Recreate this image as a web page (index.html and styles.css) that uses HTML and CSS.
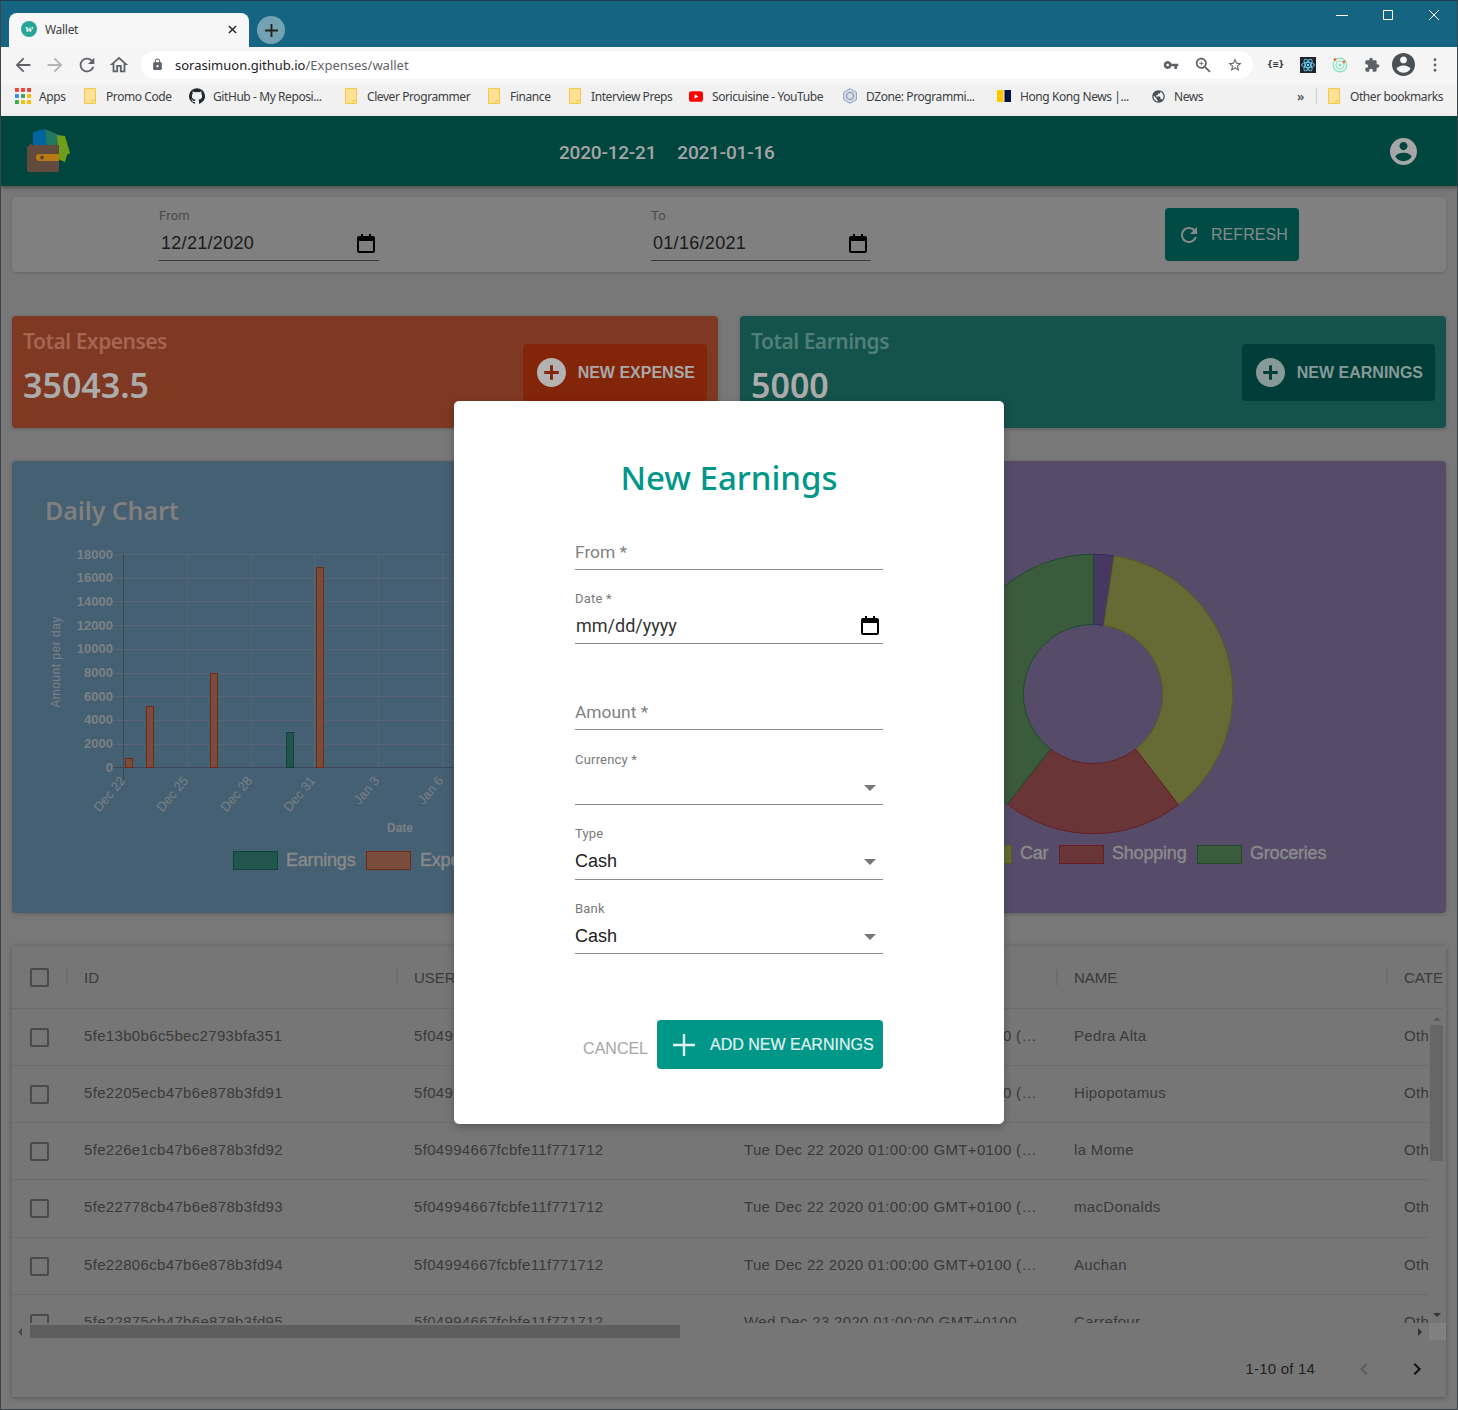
FILE: index.html
```html
<!DOCTYPE html>
<html lang="en">
<head>
  <meta charset="UTF-8">
  <title>Wallet</title>
  <link rel="stylesheet" href="styles.css">
</head>
<body>
  <svg class="defs" width="0" height="0">
    <symbol id="i-folder" viewBox="0 0 12 16"><path d="M.5.5h11v15H.5z" fill="#fde293" stroke="#f2c84c"/><path d="M8 15.5v-3h3.5" fill="none" stroke="#f2c84c"/></symbol>
    <symbol id="i-calendar" viewBox="0 0 18 19"><path d="M2 3h14a1 1 0 011 1v13a1 1 0 01-1 1H2a1 1 0 01-1-1V4a1 1 0 011-1z" fill="none" stroke="#000" stroke-width="2"/><path d="M1 3h16v4H1zM4 0h2v3H4zM12 0h2v3h-2z"/></symbol>
    <symbol id="i-plus-circle" viewBox="2 2 20 20"><path d="M12 2C6.48 2 2 6.48 2 12s4.48 10 10 10 10-4.48 10-10S17.52 2 12 2zm5 11h-4v4h-2v-4H7v-2h4V7h2v4h4v2z"/></symbol>
    <symbol id="i-account" viewBox="2 2 20 20"><path d="M12 2C6.48 2 2 6.48 2 12s4.48 10 10 10 10-4.48 10-10S17.52 2 12 2zm0 3c1.66 0 3 1.34 3 3s-1.34 3-3 3-3-1.34-3-3 1.34-3 3-3zm0 14.2c-2.5 0-4.71-1.28-6-3.22.03-1.99 4-3.08 6-3.08 1.99 0 5.97 1.09 6 3.08-1.29 1.94-3.5 3.22-6 3.22z"/></symbol>
    <symbol id="i-refresh" viewBox="0 0 24 24"><path d="M17.65 6.35C16.2 4.9 14.21 4 12 4c-4.42 0-7.99 3.58-7.99 8s3.57 8 7.99 8c3.73 0 6.84-2.55 7.73-6h-2.08c-.82 2.33-3.04 4-5.65 4-3.31 0-6-2.69-6-6s2.69-6 6-6c1.66 0 3.14.69 4.22 1.78L13 11h7V4l-2.35 2.35z"/></symbol>
  </svg>

  <div class="window">
    <!-- browser chrome -->
    <div class="tabstrip">
      <div class="tab">
        <span class="favicon">w</span>
        <span class="tab-title">Wallet</span>
        <svg class="tab-close" viewBox="0 0 10 10"><path d="M1 1l8 8M9 1l-8 8" stroke="#222" stroke-width="1.6"/></svg>
      </div>
      <div class="new-tab"><svg viewBox="0 0 14 14"><path d="M7 0v14M0 7h14" stroke="#222" stroke-width="2"/></svg></div>
      <div class="win-controls">
        <svg viewBox="0 0 12 12"><path d="M0 6.5h12" stroke="#fff"/></svg>
        <svg viewBox="0 0 12 12"><path d="M1.5 1.5h9v9h-9z" fill="none" stroke="#fff"/></svg>
        <svg viewBox="0 0 12 12"><path d="M1 1l10 10M11 1L1 11" stroke="#fff"/></svg>
      </div>
    </div>

    <div class="toolbar">
      <svg class="nav-icon" viewBox="0 0 24 24"><path fill="#5f6368" d="M20 11H7.83l5.59-5.59L12 4l-8 8 8 8 1.41-1.41L7.83 13H20v-2z"/></svg>
      <svg class="nav-icon" viewBox="0 0 24 24"><path fill="#b3b5b8" d="M12 4l-1.41 1.41L16.17 11H4v2h12.17l-5.58 5.59L12 20l8-8z"/></svg>
      <svg class="nav-icon" viewBox="0 0 24 24" fill="#5f6368"><use href="#i-refresh"/></svg>
      <svg class="nav-icon" viewBox="0 0 24 24"><path fill="#5f6368" d="M12 5.69l5 4.5V18h-2v-6H9v6H7v-7.81l5-4.5M12 3L2 12h3v8h6v-6h2v6h6v-8h3L12 3z"/></svg>
      <div class="omnibox">
        <svg class="lock" viewBox="0 0 24 24"><path fill="#5f6368" d="M18 8h-1V6c0-2.76-2.24-5-5-5S7 3.24 7 6v2H6c-1.1 0-2 .9-2 2v10c0 1.1.9 2 2 2h12c1.1 0 2-.9 2-2V10c0-1.1-.9-2-2-2zm-6 9c-1.1 0-2-.9-2-2s.9-2 2-2 2 .9 2 2-.9 2-2 2zm3.1-9H8.9V6c0-1.71 1.39-3.1 3.1-3.1 1.71 0 3.1 1.39 3.1 3.1v2z"/></svg>
        <span class="url">sorasimuon.github.io<span class="url-path">/Expenses/wallet</span></span>
        <div class="omni-icons">
          <svg viewBox="0 0 24 24"><path fill="#5f6368" d="M12.65 10C11.83 7.67 9.61 6 7 6c-3.31 0-6 2.69-6 6s2.69 6 6 6c2.61 0 4.83-1.67 5.65-4H17v4h4v-4h2v-4H12.65zM7 14c-1.1 0-2-.9-2-2s.9-2 2-2 2 .9 2 2-.9 2-2 2z"/></svg>
          <svg viewBox="2 2 19 19"><path fill="#5f6368" d="M15.5 14h-.79l-.28-.27C15.41 12.59 16 11.11 16 9.5 16 5.91 13.09 3 9.5 3S3 5.91 3 9.5 5.91 16 9.5 16c1.61 0 3.09-.59 4.23-1.57l.27.28v.79l5 4.99L20.49 19l-4.99-5zm-6 0C7.01 14 5 11.99 5 9.5S7.01 5 9.5 5 14 7.01 14 9.5 11.99 14 9.5 14zM12 10h-2v2H9v-2H7V9h2V7h1v2h2v1z"/></svg>
          <svg viewBox="0 0 24 24"><path fill="#5f6368" d="M22 9.24l-7.19-.62L12 2 9.19 8.63 2 9.24l5.46 4.73L5.82 21 12 17.27 18.18 21l-1.63-7.03L22 9.24zM12 15.4l-3.76 2.27 1-4.28-3.32-2.88 4.38-.38L12 6.1l1.71 4.04 4.38.38-3.32 2.88 1 4.28L12 15.4z"/></svg>
        </div>
      </div>
      <div class="extensions">
        <span class="ext-json">{≡}</span>
        <svg class="ext" viewBox="0 0 16 16"><rect width="16" height="16" fill="#20232a"/><g fill="none" stroke="#61dafb" stroke-width=".9"><ellipse cx="8" cy="8" rx="6.5" ry="2.6"/><ellipse cx="8" cy="8" rx="6.5" ry="2.6" transform="rotate(60 8 8)"/><ellipse cx="8" cy="8" rx="6.5" ry="2.6" transform="rotate(120 8 8)"/></g><circle cx="8" cy="8" r="1.3" fill="#61dafb"/></svg>
        <svg class="ext" viewBox="0 0 16 16"><g fill="none" stroke="#7fe3c0" stroke-width="1.2"><circle cx="8" cy="8" r="6.8"/><circle cx="8" cy="8" r="4"/></g><circle cx="8" cy="8" r="1.5" fill="#7fe3c0"/><circle cx="3" cy="2.5" r="1.5" fill="#f26d3d"/><circle cx="12" cy="5" r="1.4" fill="#f26d3d"/></svg>
        <svg class="ext" viewBox="0 0 24 24"><path fill="#5f6368" d="M20.5 11H19V7c0-1.1-.9-2-2-2h-4V3.5C13 2.12 11.88 1 10.5 1S8 2.12 8 3.5V5H4c-1.1 0-1.99.9-1.99 2v3.8H3.5c1.49 0 2.7 1.21 2.7 2.7s-1.21 2.7-2.7 2.7H2V20c0 1.1.9 2 2 2h3.8v-1.5c0-1.49 1.21-2.7 2.7-2.7 1.49 0 2.7 1.21 2.7 2.7V22H17c1.1 0 2-.9 2-2v-4h1.5c1.38 0 2.5-1.12 2.5-2.5S21.88 11 20.5 11z"/></svg>
        <svg class="avatar" fill="#4a5054"><use href="#i-account"/></svg>
        <svg class="dots" viewBox="0 0 4 16"><circle cx="2" cy="2" r="1.6" fill="#5f6368"/><circle cx="2" cy="8" r="1.6" fill="#5f6368"/><circle cx="2" cy="14" r="1.6" fill="#5f6368"/></svg>
      </div>
    </div>

    <div class="bookmarks">
      <div class="bm bm-apps">
        <svg class="bm-icon" viewBox="0 0 14 14"><g fill="#ea4335"><rect width="3.4" height="3.4"/><rect x="5.3" width="3.4" height="3.4"/><rect x="10.6" width="3.4" height="3.4"/></g><g fill="#4285f4"><rect y="5.3" width="3.4" height="3.4"/></g><g fill="#34a853"><rect x="5.3" y="5.3" width="3.4" height="3.4"/><rect y="10.6" width="3.4" height="3.4"/></g><g fill="#fbbc05"><rect x="10.6" y="5.3" width="3.4" height="3.4"/><rect x="5.3" y="10.6" width="3.4" height="3.4"/><rect x="10.6" y="10.6" width="3.4" height="3.4"/></g></svg>
        Apps
      </div>
      <div class="bm bm-promo"><svg class="bm-folder"><use href="#i-folder"/></svg>Promo Code</div>
      <div class="bm bm-github">
        <svg class="bm-icon" viewBox="0 0 24 24"><path fill="#24292e" d="M12 .3a12 12 0 00-3.8 23.38c.6.11.82-.26.82-.58v-2.03c-3.34.73-4.04-1.61-4.04-1.61-.55-1.39-1.33-1.76-1.33-1.76-1.09-.74.08-.73.08-.73 1.2.09 1.84 1.24 1.84 1.24 1.07 1.83 2.8 1.3 3.49 1 .1-.78.42-1.3.76-1.6-2.67-.31-5.47-1.34-5.47-5.93 0-1.31.47-2.38 1.24-3.22-.13-.3-.54-1.52.12-3.18 0 0 1-.32 3.3 1.23a11.5 11.5 0 016 0c2.28-1.55 3.29-1.23 3.29-1.23.66 1.66.25 2.88.12 3.18.77.84 1.23 1.91 1.23 3.22 0 4.61-2.81 5.62-5.48 5.92.43.37.81 1.1.81 2.22v3.29c0 .32.22.7.83.58A12 12 0 0012 .3z"/></svg>
        GitHub - My Reposi...
      </div>
      <div class="bm bm-clever"><svg class="bm-folder"><use href="#i-folder"/></svg>Clever Programmer</div>
      <div class="bm bm-finance"><svg class="bm-folder"><use href="#i-folder"/></svg>Finance</div>
      <div class="bm bm-prep"><svg class="bm-folder"><use href="#i-folder"/></svg>Interview Preps</div>
      <div class="bm bm-yt">
        <svg class="bm-icon" viewBox="0 0 16 12"><rect width="16" height="12" rx="3" fill="#f00"/><path d="M6.4 3.4L10.8 6l-4.4 2.6z" fill="#fff"/></svg>
        Soricuisine - YouTube
      </div>
      <div class="bm bm-dzone">
        <svg class="bm-icon" viewBox="0 0 16 16"><path d="M8 .7l6.4 3.6v7.4L8 15.3l-6.4-3.6V4.3z" fill="#d8dde6" stroke="#8d9fc2"/><circle cx="8" cy="8" r="3.6" fill="none" stroke="#7b8aa6"/></svg>
        DZone: Programmi...
      </div>
      <div class="bm bm-hk">
        <svg class="bm-icon" viewBox="0 0 14 14"><rect y="1" width="6.5" height="12" fill="#ffc800"/><rect x="7.5" y="1" width="6.5" height="12" fill="#001246"/></svg>
        Hong Kong News |...
      </div>
      <div class="bm bm-news">
        <svg class="bm-icon" viewBox="0 0 24 24"><path fill="#4a5054" d="M12 2C6.48 2 2 6.48 2 12s4.48 10 10 10 10-4.48 10-10S17.52 2 12 2zm-1 17.93c-3.95-.49-7-3.85-7-7.93 0-.62.08-1.21.21-1.79L9 15v1c0 1.1.9 2 2 2v1.93zm6.9-2.54c-.26-.81-1-1.39-1.9-1.39h-1v-3c0-.55-.45-1-1-1H8v-2h2c.55 0 1-.45 1-1V7h2c1.1 0 2-.9 2-2v-.41c2.93 1.19 5 4.06 5 7.41 0 2.08-.8 3.97-2.1 5.39z"/></svg>
        News
      </div>
      <div class="bm-more">»</div>
      <div class="bm-sep"></div>
      <div class="bm bm-other"><svg class="bm-folder"><use href="#i-folder"/></svg>Other bookmarks</div>
    </div>

    <!-- app -->
    <header class="app-bar">
      <svg class="logo" viewBox="0 0 44 44">
        <path d="M6 3L18 0l3 17H6z" fill="#00659f"/>
        <path d="M18 0l14 6-3 12H20z" fill="#23795f"/>
        <path d="M30 6l8 1 5 17-3 2-2 7-7-3z" fill="#6f9d1c"/>
        <path d="M5 14l-5 4v23c0 1 1 2 2 2h28c1 0 2-1 2-2V16H5z" fill="#634a3f"/>
        <path d="M12 25h20v7H12c-2 0-3-1.500-3-3.500s1-3.500 3-3.500z" fill="#b87a12"/>
        <circle cx="15" cy="28.500" r="2" fill="#634a3f"/>
      </svg>
      <div class="dates"><span>2020-12-21</span><span>2021-01-16</span></div>
      <svg class="user-icon"><use href="#i-account"/></svg>
    </header>

    <main class="content">
      <section class="filter-card">
        <div class="date-field">
          <label>From</label>
          <div class="date-value">12/21/2020<svg class="cal-icon"><use href="#i-calendar"/></svg></div>
        </div>
        <div class="date-field date-field-to">
          <label>To</label>
          <div class="date-value">01/16/2021<svg class="cal-icon"><use href="#i-calendar"/></svg></div>
        </div>
        <button class="refresh-btn"><svg><use href="#i-refresh"/></svg>REFRESH</button>
      </section>

      <section class="stats">
        <div class="stat-card stat-expense">
          <div>
            <div class="stat-title">Total Expenses</div>
            <div class="stat-value">35043.5</div>
          </div>
          <button class="stat-btn"><svg><use href="#i-plus-circle"/></svg>NEW EXPENSE</button>
        </div>
        <div class="stat-card stat-earning">
          <div>
            <div class="stat-title">Total Earnings</div>
            <div class="stat-value">5000</div>
          </div>
          <button class="stat-btn"><svg><use href="#i-plus-circle"/></svg>NEW EARNINGS</button>
        </div>
      </section>

      <section class="charts">
        <div class="chart-card chart-daily">
          <h2>Daily Chart</h2>
          <svg class="chart" viewBox="12 529 706 384">
            <g class="grid">
              <path d="M113 554.500H710M113 578.500H710M113 601.500H710M113 625.500H710M113 649.500H710M113 673.500H710M113 696.500H710M113 720.500H710M113 744.500H710"/>
              <path d="M187.500 554V767M251.500 554V767M314.500 554V767M378.500 554V767M442.500 554V767"/>
            </g>
            <path class="axis" d="M113 767.500H710M123.500 554V779"/>
            <g class="y-labels">
              <text x="113" y="559">18000</text><text x="113" y="582">16000</text><text x="113" y="606">14000</text>
              <text x="113" y="630">12000</text><text x="113" y="653">10000</text><text x="113" y="677">8000</text>
              <text x="113" y="701">6000</text><text x="113" y="724">4000</text><text x="113" y="748">2000</text><text x="113" y="772">0</text>
            </g>
            <g class="x-labels">
              <text transform="translate(126 781) rotate(-50)">Dec 22</text>
              <text transform="translate(189 781) rotate(-50)">Dec 25</text>
              <text transform="translate(253 781) rotate(-50)">Dec 28</text>
              <text transform="translate(316 781) rotate(-50)">Dec 31</text>
              <text transform="translate(380 781) rotate(-50)">Jan 3</text>
              <text transform="translate(444 781) rotate(-50)">Jan 6</text>
            </g>
            <text class="axis-title" transform="translate(60 662) rotate(-90)">Amount per day</text>
            <text class="axis-title axis-date" x="400" y="832">Date</text>
            <g class="bar-red">
              <rect x="125.500" y="758.500" width="7" height="9"/>
              <rect x="146.500" y="706.500" width="7" height="61"/>
              <rect x="210.500" y="673.500" width="7" height="94"/>
              <rect x="316.500" y="567.500" width="7" height="200"/>
            </g>
            <rect class="bar-green" x="286.500" y="732.500" width="7" height="35"/>
            <rect class="bar-green" x="233.500" y="851.500" width="44" height="18"/>
            <text class="legend" x="286" y="866">Earnings</text>
            <rect class="bar-red" x="366.500" y="851.500" width="44" height="18"/>
            <text class="legend" x="420" y="866">Expenses</text>
          </svg>
        </div>
        <div class="chart-card chart-category">
          <h2>Categories</h2>
          <svg class="chart" viewBox="740 529 706 384">
            <path class="seg-purple" d="M1093.300 554.300A139.700 139.700 0 0 1 1114 555.800L1103.600 625.300A69.500 69.500 0 0 0 1093.300 624.500Z"/>
            <path class="seg-olive" d="M1114 555.800A139.700 139.700 0 0 1 1178.400 804.700L1135.600 749.100A69.500 69.500 0 0 0 1103.600 625.300Z"/>
            <path class="seg-red" d="M1178.400 804.700A139.700 139.700 0 0 1 1007.300 804.100L1050.500 749.100A69.500 69.500 0 0 0 1135.600 749.100Z"/>
            <path class="seg-green" d="M1007.300 804.100A139.700 139.700 0 0 1 1093.300 554.300L1093.300 624.500A69.500 69.500 0 0 0 1050.500 749.100Z"/>
            <rect class="seg-olive" x="967.500" y="845.500" width="44" height="18"/>
            <text class="legend" x="1020" y="859">Car</text>
            <rect class="seg-red" x="1059.500" y="845.500" width="44" height="18"/>
            <text class="legend" x="1112" y="859">Shopping</text>
            <rect class="seg-green" x="1197.500" y="845.500" width="44" height="18"/>
            <text class="legend" x="1250" y="859">Groceries</text>
          </svg>
        </div>
      </section>

      <section class="table-card">
        <div class="t-row t-head">
          <div class="t-check"><span class="checkbox"></span></div>
          <div class="t-cell"><i></i>ID</div>
          <div class="t-cell"><i></i>USER ID</div>
          <div class="t-cell"><i></i>DATE</div>
          <div class="t-cell"><i></i>NAME</div>
          <div class="t-cell"><i></i>CATEGORY</div>
        </div>
        <div class="t-body">
          <div class="t-rows">
            <div class="t-row">
              <div class="t-check"><span class="checkbox"></span></div>
              <div class="t-cell">5fe13b0b6c5bec2793bfa351</div>
              <div class="t-cell">5f04994667fcbfe11f771712</div>
              <div class="t-cell"><span class="clip">Tue Dec 22 2020 01:00:00 GMT+0100 (Central European Standard Time)</span></div>
              <div class="t-cell">Pedra Alta</div>
              <div class="t-cell">Other</div>
            </div>
            <div class="t-row">
              <div class="t-check"><span class="checkbox"></span></div>
              <div class="t-cell">5fe2205ecb47b6e878b3fd91</div>
              <div class="t-cell">5f04994667fcbfe11f771712</div>
              <div class="t-cell"><span class="clip">Tue Dec 22 2020 01:00:00 GMT+0100 (Central European Standard Time)</span></div>
              <div class="t-cell">Hipopotamus</div>
              <div class="t-cell">Other</div>
            </div>
            <div class="t-row">
              <div class="t-check"><span class="checkbox"></span></div>
              <div class="t-cell">5fe226e1cb47b6e878b3fd92</div>
              <div class="t-cell">5f04994667fcbfe11f771712</div>
              <div class="t-cell"><span class="clip">Tue Dec 22 2020 01:00:00 GMT+0100 (Central European Standard Time)</span></div>
              <div class="t-cell">la Mome</div>
              <div class="t-cell">Other</div>
            </div>
            <div class="t-row">
              <div class="t-check"><span class="checkbox"></span></div>
              <div class="t-cell">5fe22778cb47b6e878b3fd93</div>
              <div class="t-cell">5f04994667fcbfe11f771712</div>
              <div class="t-cell"><span class="clip">Tue Dec 22 2020 01:00:00 GMT+0100 (Central European Standard Time)</span></div>
              <div class="t-cell">macDonalds</div>
              <div class="t-cell">Other</div>
            </div>
            <div class="t-row">
              <div class="t-check"><span class="checkbox"></span></div>
              <div class="t-cell">5fe22806cb47b6e878b3fd94</div>
              <div class="t-cell">5f04994667fcbfe11f771712</div>
              <div class="t-cell"><span class="clip">Tue Dec 22 2020 01:00:00 GMT+0100 (Central European Standard Time)</span></div>
              <div class="t-cell">Auchan</div>
              <div class="t-cell">Other</div>
            </div>
            <div class="t-row">
              <div class="t-check"><span class="checkbox"></span></div>
              <div class="t-cell">5fe22875cb47b6e878b3fd95</div>
              <div class="t-cell">5f04994667fcbfe11f771712</div>
              <div class="t-cell"><span class="clip">Wed Dec 23 2020 01:00:00 GMT+0100 (Central European Standard Time)</span></div>
              <div class="t-cell">Carrefour</div>
              <div class="t-cell">Other</div>
            </div>
          </div>
          <div class="v-scroll">
            <span class="arrow-up"></span>
            <div class="v-thumb"></div>
            <span class="arrow-down"></span>
          </div>
        </div>
        <div class="h-scroll">
          <span class="arrow-left"></span>
          <div class="h-thumb"></div>
          <span class="arrow-right"></span>
          <div class="scroll-corner"></div>
        </div>
        <div class="t-footer">
          <span class="page-count">1-10 of 14</span>
          <svg class="page-prev" viewBox="0 0 24 24"><path d="M15.41 7.41L14 6l-6 6 6 6 1.41-1.41L10.83 12z"/></svg>
          <svg class="page-next" viewBox="0 0 24 24"><path d="M10 6L8.59 7.41 13.17 12l-4.58 4.59L10 18l6-6z"/></svg>
        </div>
      </section>
    </main>

    <!-- dialog -->
    <div class="modal">
      <h1>New Earnings</h1>
      <div class="field field-plain field-from"><span class="placeholder">From *</span></div>
      <div class="field field-date">
        <label>Date *</label>
        <div class="field-value date-mask">mm/dd/yyyy<svg class="cal-icon"><use href="#i-calendar"/></svg></div>
      </div>
      <div class="field field-plain field-amount"><span class="placeholder">Amount *</span></div>
      <div class="field field-currency">
        <label>Currency *</label>
        <div class="field-value"><span></span><i class="caret"></i></div>
      </div>
      <div class="field">
        <label>Type</label>
        <div class="field-value">Cash<i class="caret"></i></div>
      </div>
      <div class="field field-bank">
        <label>Bank</label>
        <div class="field-value">Cash<i class="caret"></i></div>
      </div>
      <div class="modal-actions">
        <button class="cancel-btn">CANCEL</button>
        <button class="add-btn"><svg viewBox="0 0 22 22"><path d="M11 0v22M0 11h22" stroke="#e0f2f1" stroke-width="2.400"/></svg>ADD NEW EARNINGS</button>
      </div>
    </div>
  </div>
</body>
</html>
```

FILE: styles.css
```css
* {
  box-sizing: border-box;
}
html, body {
  margin: 0;
  height: 100%;
  overflow: hidden;
}
body {
  font-family: "Liberation Sans", Arial, sans-serif;
  background: #787878;
}
button {
  border: none;
  cursor: pointer;
  font-family: inherit;
}
.defs {
  position: absolute;
}
.window {
  position: relative;
  width: 1458px;
  height: 1410px;
  border: 1px solid #3c4449;
  border-top-color: #1d3a4b;
  overflow: hidden;
}

/* browser chrome */
.tabstrip {
  height: 46px;
  background: #156481;
  display: flex;
  align-items: flex-end;
  padding-left: 8px;
}
.tab {
  width: 240px;
  height: 34px;
  background: #f7f7f7;
  border-radius: 8px 8px 0 0;
  display: flex;
  align-items: center;
  padding: 0 12px 2px;
  font: 12px "Noto Sans", sans-serif;
  letter-spacing: -.3px;
  color: #3c4043;
}
.favicon {
  width: 16px;
  height: 16px;
  border-radius: 50%;
  background: #26a69a;
  color: #fff;
  font: italic 700 11px/15px "Liberation Serif", serif;
  text-align: center;
}
.tab-title {
  margin-left: 8px;
  flex: 1;
}
.tab-close {
  width: 9px;
  height: 9px;
}
.new-tab {
  width: 28px;
  height: 28px;
  border-radius: 50%;
  background: #73a2b3;
  margin: 0 0 3px 8px;
  display: flex;
  align-items: center;
  justify-content: center;
}
.new-tab svg {
  width: 13px;
  height: 13px;
}
.win-controls {
  margin-left: auto;
  align-self: flex-start;
  display: flex;
  gap: 34px;
  padding: 8px 17px 0 0;
}
.win-controls svg {
  width: 12px;
  height: 12px;
}
.toolbar {
  height: 37px;
  background: #f5f5f5;
  display: flex;
  align-items: center;
  padding: 0 0 2px 11px;
}
.nav-icon {
  width: 22px;
  height: 22px;
  margin-right: 10px;
}
.omnibox {
  width: 1112px;
  height: 28px;
  margin-left: 1px;
  background: #fff;
  border-radius: 14px;
  display: flex;
  align-items: center;
  padding: 0 10px 0 10px;
}
.lock {
  width: 13px;
  height: 13px;
}
.url {
  margin-left: 11px;
  font: 13px "Noto Sans", sans-serif;
  color: #202124;
}
.url-path {
  color: #5f6368;
}
.omni-icons {
  margin-left: auto;
  display: flex;
  gap: 16px;
}
.omni-icons svg {
  width: 16px;
  height: 16px;
}
.extensions {
  display: flex;
  align-items: center;
  margin-left: 14px;
}
.ext-json {
  width: 17px;
  font: 700 8px "DejaVu Sans", sans-serif;
  letter-spacing: -.5px;
  color: #333;
  margin-right: 16px;
  white-space: nowrap;
}
.ext {
  width: 16px;
  height: 16px;
  margin-right: 16px;
}
.avatar {
  width: 23px;
  height: 23px;
  margin-left: -4px;
  margin-right: 12px;
}
.dots {
  width: 4px;
  height: 14px;
  margin-left: 6px;
}
.bookmarks {
  height: 32px;
  background: #f1f1f1;
  display: flex;
  align-items: center;
  padding-bottom: 8px;
  font: 12px "Noto Sans", sans-serif;
  color: #3c4043;
  white-space: nowrap;
}
.bm {
  display: flex;
  align-items: center;
  letter-spacing: -.42px;
}
.bm-icon {
  width: 16px;
  height: 16px;
  margin-right: 8px;
}
.bm-folder {
  width: 12px;
  height: 16px;
  margin-right: 10px;
}
.bm-apps { margin-left: 14px; width: 69px; }
.bm-promo { width: 105px; }
.bm-github { width: 156px; }
.bm-clever { width: 143px; }
.bm-finance { width: 81px; }
.bm-prep { width: 120px; }
.bm-yt { width: 153px; }
.bm-dzone { width: 155px; }
.bm-hk { width: 154px; }
.bm-news { width: 146px; }
.bm-more {
  width: 19px;
  color: #5f6368;
  font-weight: 700;
}
.bm-sep {
  width: 1px;
  height: 16px;
  background: #ccc;
  margin-right: 11px;
}
.bm-yt .bm-icon { width: 14px; height: 11px; margin-right: 9px; }
.bm-hk .bm-icon { width: 14px; height: 14px; margin-right: 9px; }
.bm-news .bm-icon { width: 15px; height: 15px; }

/* app */
.app-bar {
  height: 70px;
  background: #00453e;
  display: flex;
  align-items: center;
  padding: 0 40px 0 26px;
  box-shadow: 0 2px 4px rgba(0, 0, 0, .35);
  position: relative;
}
.logo {
  width: 44px;
  height: 44px;
}
.dates {
  margin: 3px 0 0 488px;
  display: flex;
  gap: 21px;
  font: 500 19px Roboto, sans-serif;
  letter-spacing: -.2px;
  color: #a6a6a6;
}
.user-icon {
  width: 27px;
  height: 27px;
  margin-left: auto;
  fill: #a6a6a6;
}
.content {
  padding: 11px 11px 0;
}
.filter-card {
  height: 75px;
  background: #808080;
  border-radius: 4px;
  display: flex;
  padding: 11px 0 0 147px;
  box-shadow: 0 1px 3px rgba(0, 0, 0, .15);
}
.date-field {
  width: 220px;
  height: 53px;
  border-bottom: 1px solid #3b3b3b;
}
.date-field label {
  display: block;
  margin-top: 1px;
  font: 13px/14px Roboto, sans-serif;
  letter-spacing: .2px;
  color: #4a4a4a;
}
.date-field-to {
  margin-left: 272px;
}
.date-value {
  display: flex;
  align-items: center;
  justify-content: space-between;
  padding: 10px 4px 0 2px;
  font-size: 18px;
  letter-spacing: .3px;
  color: #1a1a1a;
}
.cal-icon {
  width: 18px;
  height: 19px;
}
.refresh-btn {
  width: 134px;
  height: 53px;
  margin-left: 294px;
  background: #004c45;
  border-radius: 4px;
  display: flex;
  align-items: center;
  padding: 0 0 0 12px;
  font-size: 16px;
  letter-spacing: .05px;
  color: #858b89;
}
.refresh-btn svg {
  width: 24px;
  height: 24px;
  margin-right: 10px;
  fill: #858b89;
}
.stats {
  display: flex;
  gap: 22px;
  margin-top: 44px;
}
.stat-card {
  flex: 1;
  height: 112px;
  border-radius: 4px;
  display: flex;
  justify-content: space-between;
  align-items: flex-start;
  padding: 10px 11px 0;
  box-shadow: 0 1px 4px rgba(0, 0, 0, .2);
}
.stat-expense {
  background: #7f3923;
}
.stat-earning {
  background: #14524c;
}
.stat-title {
  font: 600 21px/30px "Noto Sans", sans-serif;
  letter-spacing: -.5px;
}
.stat-expense .stat-title {
  color: #a56552;
}
.stat-earning .stat-title {
  color: #4f7f76;
}
.stat-value {
  margin-top: 7px;
  font: 600 34px/44px "Noto Sans", sans-serif;
  color: #ababab;
}
.stat-btn {
  margin-top: 18px;
  height: 57px;
  display: flex;
  align-items: center;
  padding: 0 12px 0 14px;
  border-radius: 4px;
  font-size: 16px;
  font-weight: 700;
  color: #a8a8a8;
}
.stat-btn svg {
  width: 29px;
  height: 29px;
  margin-right: 12px;
}
.stat-expense .stat-btn {
  background: #822508;
}
.stat-expense .stat-btn svg {
  fill: #b3b3b3;
}
.stat-earning .stat-btn {
  background: #003d38;
  color: #879a97;
}
.stat-earning .stat-btn svg {
  fill: #879a97;
}
.charts {
  display: flex;
  gap: 22px;
  margin-top: 33px;
}
.chart-card {
  flex: 1;
  height: 452px;
  border-radius: 4px;
  box-shadow: 0 1px 4px rgba(0, 0, 0, .2);
}
.chart-card h2 {
  margin: 0;
  padding: 31px 0 0 33px;
  height: 68px;
  font: 600 25px/36px "Noto Sans", sans-serif;
  letter-spacing: -.1px;
  color: #7f7f7f;
}
.chart-daily {
  background: #456072;
}
.chart-category {
  background: #564c6a;
}
.chart {
  display: block;
  width: 706px;
  height: 384px;
}
.grid path {
  fill: none;
  stroke: #566474;
}
.axis {
  fill: none;
  stroke: #3a4856;
}
.y-labels text {
  font-size: 13px;
  font-weight: 700;
  text-anchor: end;
  fill: #7b8086;
}
.x-labels text {
  font-size: 13px;
  text-anchor: end;
  fill: #7b8086;
}
.axis-title {
  font-size: 12px;
  letter-spacing: .5px;
  text-anchor: middle;
  fill: #7b8086;
}
.axis-date {
  font-weight: 700;
  letter-spacing: 0;
}
.bar-red rect, rect.bar-red {
  fill: #7a4c3b;
  stroke: #702a15;
}
.bar-green {
  fill: #22554e;
  stroke: #0e443c;
}
.legend {
  font-size: 18px;
  letter-spacing: -.2px;
  stroke: #8a8a8a;
  stroke-width: .4;
  fill: #8a8a8a;
}
.seg-purple {
  fill: #473862;
  stroke: #372667;
}
.seg-olive {
  fill: #666a35;
  stroke: #575c1d;
}
.seg-red {
  fill: #6a3536;
  stroke: #671d27;
}
.seg-green {
  fill: #3b5b3d;
  stroke: #1f4a2b;
}

/* table */
.table-card {
  height: 451px;
  margin-top: 33px;
  background: #767676;
  box-shadow: 0 1px 5px rgba(0, 0, 0, .3);
  font-size: 15px;
  letter-spacing: .33px;
  color: #3a3a3a;
  overflow: hidden;
}
.t-row {
  display: flex;
  height: 57px;
  border-bottom: 1px solid #6c6c6c;
  white-space: nowrap;
}
.t-rows .t-row:nth-child(4) {
  height: 58px;
}
.t-head {
  width: 1431px;
  height: 63px;
  overflow: hidden;
  letter-spacing: 0;
}
.t-check {
  flex: 0 0 54px;
  display: flex;
  align-items: center;
  padding-left: 18px;
}
.checkbox {
  width: 19px;
  height: 19px;
  border: 2px solid #4a4a4a;
  border-radius: 2px;
}
.t-cell {
  flex: 0 0 330px;
  display: flex;
  align-items: center;
  padding: 0 0 4px 18px;
}
.t-head .t-cell {
  padding: 0;
}
.t-head i {
  width: 2px;
  height: 16px;
  margin-right: 16px;
  background: #6c6c6c;
}
.clip {
  width: 294px;
  overflow: hidden;
  text-overflow: ellipsis;
}
.t-body {
  display: flex;
  height: 314px;
}
.t-rows {
  width: 1416px;
  overflow: hidden;
}
.v-scroll {
  flex: 0 0 17px;
  width: 17px;
  display: flex;
  flex-direction: column;
  align-items: center;
  padding-top: 8px;
}
.v-thumb {
  width: 13px;
  height: 136px;
  margin-top: 4px;
  background: #666;
}
.arrow-up, .arrow-down, .arrow-left, .arrow-right {
  width: 0;
  height: 0;
  border: 4px solid transparent;
}
.arrow-up {
  border-top: 0;
  border-bottom-color: #5a5a5a;
}
.arrow-down {
  margin-top: auto;
  margin-bottom: 6px;
  border-bottom: 0;
  border-top-color: #333;
}
.h-scroll {
  height: 17px;
  display: flex;
  align-items: center;
}
.arrow-left {
  margin-left: 6px;
  border-left: 0;
  border-right-color: #4a4a4a;
}
.h-thumb {
  width: 650px;
  height: 13px;
  margin-left: 8px;
  background: #5e5e5e;
}
.arrow-right {
  margin-left: auto;
  margin-right: 7px;
  border-right: 0;
  border-left-color: #333;
}
.scroll-corner {
  width: 17px;
  height: 17px;
  background: #808080;
}
.t-footer {
  height: 57px;
  display: flex;
  align-items: center;
  justify-content: flex-end;
  letter-spacing: .2px;
  color: #222;
}
.page-count {
  margin-right: 37px;
}
.page-prev, .page-next {
  width: 24px;
  height: 24px;
}
.page-prev {
  fill: #5c5c5c;
  margin-right: 29px;
}
.page-next {
  fill: #111;
  margin-right: 17px;
}

/* dialog */
.modal {
  position: absolute;
  left: 453px;
  top: 400px;
  width: 550px;
  height: 723px;
  background: #fff;
  border-radius: 5px;
  padding: 56px 121px 0;
  box-shadow: 0 3px 8px rgba(0, 0, 0, .25);
}
.modal h1 {
  margin: 0;
  height: 46px;
  font: 500 33px/42px "Noto Sans", sans-serif;
  color: #009688;
  text-align: center;
}
.field {
  height: 54px;
  margin-top: 21px;
  border-bottom: 1px solid #8c8c8c;
  display: flex;
  flex-direction: column;
  justify-content: flex-end;
}
.field label {
  margin-top: 1px;
  font: 13px/14px Roboto, sans-serif;
  letter-spacing: .2px;
  color: #7a7a7a;
  margin-bottom: auto;
}
.field-plain {
  height: 30px;
  margin-top: 56px;
  padding-bottom: 4px;
}
.field-from {
  margin-top: 37px;
}
.field-date {
  margin-top: 20px;
}
.field-date label {
  margin-top: 2px;
}
.field-currency {
  height: 53px;
  margin-top: 22px;
}
.field-currency .caret {
  margin-top: 4px;
}
.field-bank {
  height: 53px;
}
.field-bank .field-value {
  margin-bottom: -1px;
}
.placeholder {
  font: 17.400px/26px Roboto, sans-serif;
  color: #828282;
}
.field-value {
  height: 36px;
  display: flex;
  align-items: center;
  justify-content: space-between;
  padding-right: 7px;
  font-size: 18px;
  color: #222;
}
.date-mask {
  font-family: Roboto, sans-serif;
  color: #333;
  padding: 0 4px 0 1px;
}
.caret {
  width: 0;
  height: 0;
  margin: 2px 0 0 auto;
  border-left: 6px solid transparent;
  border-right: 6px solid transparent;
  border-top: 6px solid #777;
}
.modal-actions {
  margin-top: 66px;
  display: flex;
  justify-content: flex-end;
  align-items: flex-start;
}
.cancel-btn {
  margin: 20px 9px 0 0;
  padding: 0;
  background: none;
  font-size: 16px;
  color: #a6a6a6;
}
.add-btn {
  width: 226px;
  height: 49px;
  background: #009688;
  border-radius: 4px;
  display: flex;
  align-items: center;
  padding-left: 16px;
  font-size: 16px;
  -webkit-text-stroke: .2px #e0f2f1;
  color: #e0f2f1;
}
.add-btn svg {
  width: 22px;
  height: 22px;
  margin-right: 15px;
}
```
